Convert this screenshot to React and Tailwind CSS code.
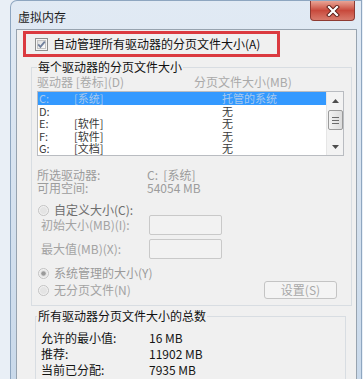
import React from "react";

function CheckBox() {
  return (
    <svg width="13" height="13" viewBox="0 0 13 13" className="shrink-0">
      <defs>
        <linearGradient id="cbg" x1="0" y1="0" x2="1" y2="1">
          <stop offset="0" stopColor="#dcdcdc" />
          <stop offset="1" stopColor="#ffffff" />
        </linearGradient>
      </defs>
      <rect x="0.5" y="0.5" width="12" height="12" fill="#f4f4f4" stroke="#8e8f8f" />
      <rect x="2.5" y="2.5" width="8" height="8" fill="url(#cbg)" stroke="#c4c4c4" />
      <path d="M3.2 6.4 L5.4 8.8 L9.8 3.6" fill="none" stroke="#6f7f9c" strokeWidth="1.8" />
    </svg>
  );
}

function Radio({ on }) {
  return (
    <svg width="11" height="11" viewBox="0 0 11 11" className="shrink-0">
      <circle cx="5.5" cy="5.5" r="5" fill="#f2f2f2" stroke="#c2c2c2" />
      <circle cx="5.5" cy="5.5" r="3.5" fill="#e4e4e4" />
      {on && <circle cx="5.5" cy="5.5" r="2.3" fill="#9a9a9a" />}
    </svg>
  );
}

function CloseButton() {
  return (
    <div className="w-[45px] h-[20px] mr-[6px] rounded-b-[4px] border border-t-0 border-[#8e3a32] bg-gradient-to-b from-[#e8a496] via-[#c8493c] to-[#d87a6c] flex items-center justify-center">
      <svg width="14" height="12" viewBox="0 0 14 12">
        <path d="M3 2 L11 10 M11 2 L3 10" stroke="#5a1c16" strokeWidth="4" strokeLinecap="square" />
        <path d="M3 2 L11 10 M11 2 L3 10" stroke="#ffffff" strokeWidth="2.2" strokeLinecap="square" />
      </svg>
    </div>
  );
}

const drives = [
  { d: "C:", label: "[系统]", size: "托管的系统", sel: true },
  { d: "D:", label: "", size: "无" },
  { d: "E:", label: "[软件]", size: "无" },
  { d: "F:", label: "[软件]", size: "无" },
  { d: "G:", label: "[文档]", size: "无" },
];

function ScrollBar() {
  return (
    <div className="w-[17px] h-full bg-[#f3f3f3] border-l border-[#e6e6e6] flex flex-col items-center">
      <div className="h-[17px] w-full flex items-center justify-center">
        <svg width="7" height="4" viewBox="0 0 7 4">
          <path d="M0 4 L3.5 0 L7 4 Z" fill="#4d4d4d" />
        </svg>
      </div>
      <div className="mt-[1px] w-[15px] h-[20px] rounded-[2px] border border-[#9b9b9b] bg-gradient-to-r from-[#f2f2f2] to-[#dcdcdc] flex flex-col items-center justify-center gap-[2px]">
        <div className="w-[7px] h-[1px] bg-[#6b6b6b]" />
        <div className="w-[7px] h-[1px] bg-[#6b6b6b]" />
        <div className="w-[7px] h-[1px] bg-[#6b6b6b]" />
      </div>
      <div className="flex-1" />
      <div className="h-[17px] w-full flex items-center justify-center">
        <svg width="7" height="4" viewBox="0 0 7 4">
          <path d="M0 0 L3.5 4 L7 0 Z" fill="#4d4d4d" />
        </svg>
      </div>
    </div>
  );
}

export default function App() {
  return (
    <div className="w-[363px] h-[379px] overflow-hidden bg-[#e9eff6] flex font-['Noto_Sans_CJK_SC','Liberation_Sans',sans-serif] text-[12px]">
      <div className="ml-[10px] w-[352px] h-[379px] shrink-0 flex flex-col rounded-tl-[7px] border-l border-t border-r border-[#8ea6c0] bg-gradient-to-b from-[#e1eaf4] via-[#d6e2ef] to-[#c9d9ea]">
        {/* title bar */}
        <div className="h-[28px] flex justify-between items-start shrink-0">
          <div className="pl-[7px] pt-[8px] leading-[16px] text-[12px] text-[#1b1b1b]">虚拟内存</div>
          <CloseButton />
        </div>

        <div className="flex-1 pl-[5px] pr-[4px] flex min-h-0">
          <div className="w-[341px] h-full border border-b-0 border-[#97a3af] bg-[#f0f0f0] flex flex-col">
            {/* highlighted checkbox */}
            <div className="ml-[6px] mt-[1px] w-[257px] h-[26px] border-[3px] border-[#db3a40] flex items-center pl-[9px] gap-[5px] shrink-0">
              <CheckBox />
              <span className="leading-[14px] text-[#111]">自动管理所有驱动器的分页文件大小(A)</span>
            </div>

            {/* per-drive group */}
            <fieldset className="ml-[14px] mt-[4px] w-[321px] h-[245px] border border-[#d8dde2] shrink-0">
              <legend className="ml-[5px] px-[1px] leading-[12px] text-[#111]">每个驱动器的分页文件大小</legend>

              <div className="mt-[3px] pl-[5px] flex leading-[12px] text-[#a9a9a9]">
                <span className="w-[157px]">驱动器 [卷标](D)</span>
                <span>分页文件大小(MB)</span>
              </div>

              <div className="ml-[5px] mt-[3px] w-[307px] h-[65px] border border-[#b9bcc1] bg-white flex">
                <div className="flex-1 flex flex-col text-[11px]">
                  {drives.map((r) => (
                    <div
                      key={r.d}
                      className={`h-[12.5px] leading-[12px] flex items-center ${r.sel ? "bg-[#3399ff] text-[#a9c9ee]" : "text-[#3a3a3a]"}`}
                    >
                      <span className="w-[36px] pl-[1px]">{r.d}</span>
                      <span className="w-[148px]">{r.label}</span>
                      <span>{r.size}</span>
                    </div>
                  ))}
                </div>
                <ScrollBar />
              </div>

              <div className="mt-[12px] pl-[5px] text-[#9c9c9c] leading-[13px]">
                <div className="flex">
                  <span className="w-[110px]">所选驱动器:</span>
                  <span>C:&nbsp;&nbsp;[系统]</span>
                </div>
                <div className="flex">
                  <span className="w-[110px]">可用空间:</span>
                  <span>54054 MB</span>
                </div>
              </div>

              <div className="mt-[10px] ml-[6px] h-[12px] flex items-center gap-[5px]">
                <Radio />
                <span className="leading-[12px] text-[#6e6e6e]">自定义大小(C):</span>
              </div>

              <div className="pl-[9px] flex items-center h-[20px] mt-[-1px]">
                <span className="w-[108px] leading-[12px] text-[#a3a3a3]">初始大小(MB)(I):</span>
                <div className="w-[73px] h-[20px] border border-[#c9c9c9] rounded-[2px] bg-[#f2f2f2]" />
              </div>
              <div className="pl-[9px] flex items-center h-[20px] mt-[4px]">
                <span className="w-[108px] leading-[12px] text-[#a3a3a3]">最大值(MB)(X):</span>
                <div className="w-[73px] h-[20px] border border-[#c9c9c9] rounded-[2px] bg-[#f2f2f2]" />
              </div>

              <div className="mt-[8px] ml-[6px] h-[12px] flex items-center gap-[5px]">
                <Radio on />
                <span className="leading-[12px] text-[#9a9a9a]">系统管理的大小(Y)</span>
              </div>
              <div className="mt-[2px] ml-[6px] mr-[14px] h-[18px] flex items-center justify-between">
                <div className="flex items-center gap-[5px]">
                  <Radio />
                  <span className="leading-[12px] text-[#a3a3a3]">无分页文件(N)</span>
                </div>
                <div className="w-[73px] h-[18px] border border-[#c4c4c4] rounded-[3px] bg-[#f4f4f4] flex items-center justify-center text-[#a8a8a8] leading-[12px]">
                  设置(S)
                </div>
              </div>
            </fieldset>

            {/* totals group */}
            <fieldset className="ml-[18px] mt-[4px] w-[311px] flex-1 border border-b-0 border-[#d8dde2]">
              <legend className="ml-[1px] px-[1px] leading-[12px] text-[#111]">所有驱动器分页文件大小的总数</legend>
              <div className="mt-[8px] pl-[5px] leading-[16px] text-[#141414]">
                <div className="flex">
                  <span className="w-[108px]">允许的最小值:</span>
                  <span>16 MB</span>
                </div>
                <div className="flex">
                  <span className="w-[108px]">推荐:</span>
                  <span>11902 MB</span>
                </div>
                <div className="flex">
                  <span className="w-[108px]">当前已分配:</span>
                  <span>7935 MB</span>
                </div>
              </div>
            </fieldset>
          </div>
        </div>
      </div>
    </div>
  );
}
